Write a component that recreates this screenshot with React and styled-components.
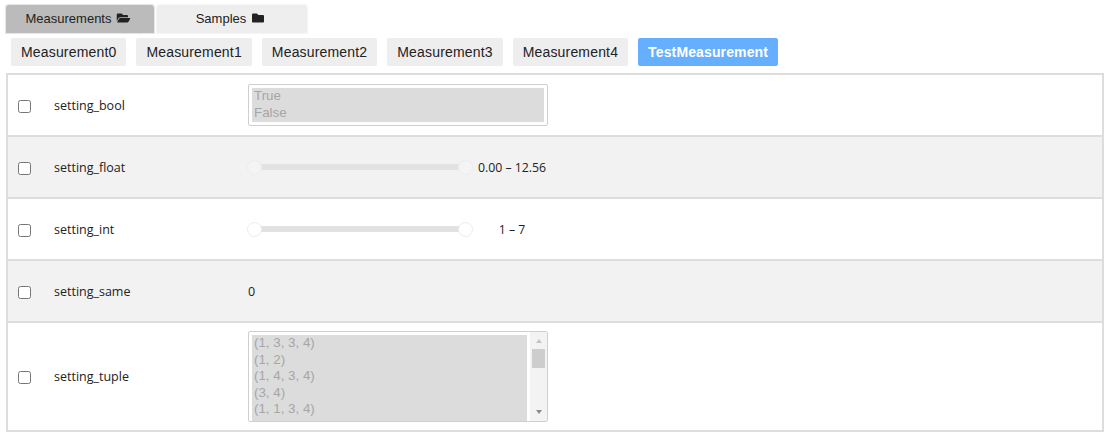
import styled, { createGlobalStyle } from 'styled-components'

const GlobalStyle = createGlobalStyle`
body {
  margin: 0;
  background: #fff;
  font-family: 'Open Sans', sans-serif;
  color: #222;
}
`

const Page = styled.div`
width: 1110px;
height: 439px;
overflow: hidden;
padding: 5px 6px 0 6px;
box-sizing: border-box;
`

const TabBar = styled.div`
display: flex;
gap: 3px;
height: 28px;
`

const Tab = styled.div`
width: ${p => p.$w}px;
box-sizing: border-box;
padding: 0 3px 2px 0;
display: flex;
align-items: center;
justify-content: center;
gap: 5px;
font-family: 'Liberation Sans', Arial, sans-serif;
font-size: 13px;
color: #222;
background: ${p => (p.$active ? '#bbbbbb' : '#eeeeee')};
border-radius: 3px 3px 0 0;
box-shadow: 0 0 1px 1px ${p => (p.$active ? '#e4e4e4' : '#f6f6f6')};
`

const ButtonRow = styled.div`
display: flex;
gap: 10px;
margin: 5px 0 7px 5px;
`

const MeasureButton = styled.div`
height: 28px;
padding: 0 10px;
display: flex;
align-items: center;
border-radius: 2px;
font-family: 'Liberation Sans', Arial, sans-serif;
font-size: 14px;
letter-spacing: ${p => (p.$active ? '0.13px' : '0.17px')};
font-weight: ${p => (p.$active ? 700 : 400)};
color: ${p => (p.$active ? '#fff' : '#222')};
background: ${p => (p.$active ? '#66afff' : '#eeeeee')};
`

const Table = styled.div`
width: 1098px;
box-sizing: border-box;
border: 2px solid #dddddd;
`

const Row = styled.div`
display: flex;
align-items: center;
height: ${p => p.$h || 60}px;
background: ${p => (p.$shaded ? '#f2f2f2' : '#fff')};
border-top: ${p => (p.$first ? 'none' : '2px solid #dddddd')};
`

const CheckCell = styled.div`
width: 46px;
margin-top: 2px;
padding-left: 10px;
box-sizing: border-box;
display: flex;
`

const Check = styled.input`
width: 13px;
height: 13px;
margin: 0;
`

const Name = styled.div`
width: 194px;
margin-top: ${p => (p.$tall ? '0' : '2px')};
font-size: 12.5px;
line-height: 16px;
color: #222;
`

const ListBox = styled.div`
width: 300px;
height: ${p => p.$h}px;
box-sizing: border-box;
border: 1px solid #cfcfcf;
border-radius: 2px;
padding: 3px 0 0 3px;
display: flex;
overflow: hidden;
background: #fff;
`

const Options = styled.div`
flex: 1;
margin-right: 3px;
background: #dcdcdc;
height: ${p => (p.$scroll ? '100%' : '34px')};
overflow: hidden;
padding-left: 2px;
font-family: 'Liberation Sans', Arial, sans-serif;
font-size: 13.33px;
line-height: 16.5px;
color: #a6a6a6;
`

const ScrollBar = styled.div`
width: 17px;
margin-top: -3px;
background: #f3f3f3;
display: flex;
flex-direction: column;
align-items: center;
padding: 7px 0 7px;
box-sizing: border-box;
`

const Thumb = styled.div`
width: 13px;
height: 19px;
background: #cdcdcd;
margin: 6px 0 auto;
`

const Arrow = styled.div`
width: 0;
height: 0;
border-left: 3.5px solid transparent;
border-right: 3.5px solid transparent;
border-${p => (p.$up ? 'bottom' : 'top')}: 4px solid ${p => (p.$up ? '#c4c4c4' : '#8a8a8a')};
`

const SliderBox = styled.div`
width: 226px;
height: 15px;
margin-left: -1px;
display: flex;
align-items: center;
position: relative;
`

const Track = styled.div`
flex: 1;
height: 6px;
margin: 0 4px;
background: #e2e2e2;
`

const Handle = styled.div`
position: absolute;
top: 0;
${p => p.$side}: 0;
width: 15px;
height: 15px;
box-sizing: border-box;
border-radius: 50%;
border: 1px solid #ececec;
background: ${p => (p.$shaded ? '#f4f4f4' : '#fff')};
`

const RangeLabel = styled.div`
width: 78px;
margin-top: 2px;
text-align: center;
font-size: 12.3px;
line-height: 16px;
color: #222;
`

const Value = styled.div`
margin-top: 2px;
font-size: 12.5px;
line-height: 16px;
color: #222;
`

const FolderOpen = () => (
  <svg width="15" height="12" viewBox="0 0 576 512" fill="#222">
    <path d="M572.694 292.093L500.27 416.248A63.997 63.997 0 0 1 444.989 448H45.025c-18.523 0-30.064-20.093-20.731-36.093l72.424-124.155A64 64 0 0 1 152 256h399.964c18.523 0 30.064 20.093 20.73 36.093zM152 224h328v-48c0-26.51-21.49-48-48-48H272l-64-64H48C21.49 64 0 85.49 0 112v278.046l69.077-118.418C86.214 242.25 117.989 224 152 224z" />
  </svg>
)

const FolderClosed = () => (
  <svg width="14" height="12" viewBox="0 0 512 512" fill="#222">
    <path d="M464 128H272l-64-64H48C21.49 64 0 85.49 0 112v288c0 26.51 21.49 48 48 48h416c26.51 0 48-21.49 48-48V176c0-26.51-21.49-48-48-48z" />
  </svg>
)

const measurements = ['Measurement0', 'Measurement1', 'Measurement2', 'Measurement3', 'Measurement4']
const tuples = ['(1, 3, 3, 4)', '(1, 2)', '(1, 4, 3, 4)', '(3, 4)', '(1, 1, 3, 4)', '(5, 4)']

function Slider({ shaded, label }) {
  return (
    <>
      <SliderBox>
        <Track />
        <Handle $side="left" $shaded={shaded} />
        <Handle $side="right" $shaded={shaded} />
      </SliderBox>
      <RangeLabel>{label}</RangeLabel>
    </>
  )
}

export default function App() {
  return (
    <Page>
      <GlobalStyle />
      <TabBar>
        <Tab $w={148} $active>Measurements <FolderOpen /></Tab>
        <Tab $w={150}>Samples <FolderClosed /></Tab>
      </TabBar>
      <ButtonRow>
        {measurements.map(m => <MeasureButton key={m}>{m}</MeasureButton>)}
        <MeasureButton $active>TestMeasurement</MeasureButton>
      </ButtonRow>
      <Table>
        <Row $first>
          <CheckCell><Check type="checkbox" /></CheckCell>
          <Name>setting_bool</Name>
          <ListBox $h={42}>
            <Options>
              <div>True</div>
              <div>False</div>
            </Options>
          </ListBox>
        </Row>
        <Row $shaded>
          <CheckCell><Check type="checkbox" /></CheckCell>
          <Name>setting_float</Name>
          <Slider shaded label="0.00 – 12.56" />
        </Row>
        <Row>
          <CheckCell><Check type="checkbox" /></CheckCell>
          <Name>setting_int</Name>
          <Slider label="1 – 7" />
        </Row>
        <Row $shaded>
          <CheckCell><Check type="checkbox" /></CheckCell>
          <Name>setting_same</Name>
          <Value>0</Value>
        </Row>
        <Row $h={107}>
          <CheckCell><Check type="checkbox" /></CheckCell>
          <Name $tall>setting_tuple</Name>
          <ListBox $h={91}>
            <Options $scroll>
              {tuples.map(t => <div key={t}>{t}</div>)}
            </Options>
            <ScrollBar>
              <Arrow $up />
              <Thumb />
              <Arrow />
            </ScrollBar>
          </ListBox>
        </Row>
      </Table>
    </Page>
  )
}
